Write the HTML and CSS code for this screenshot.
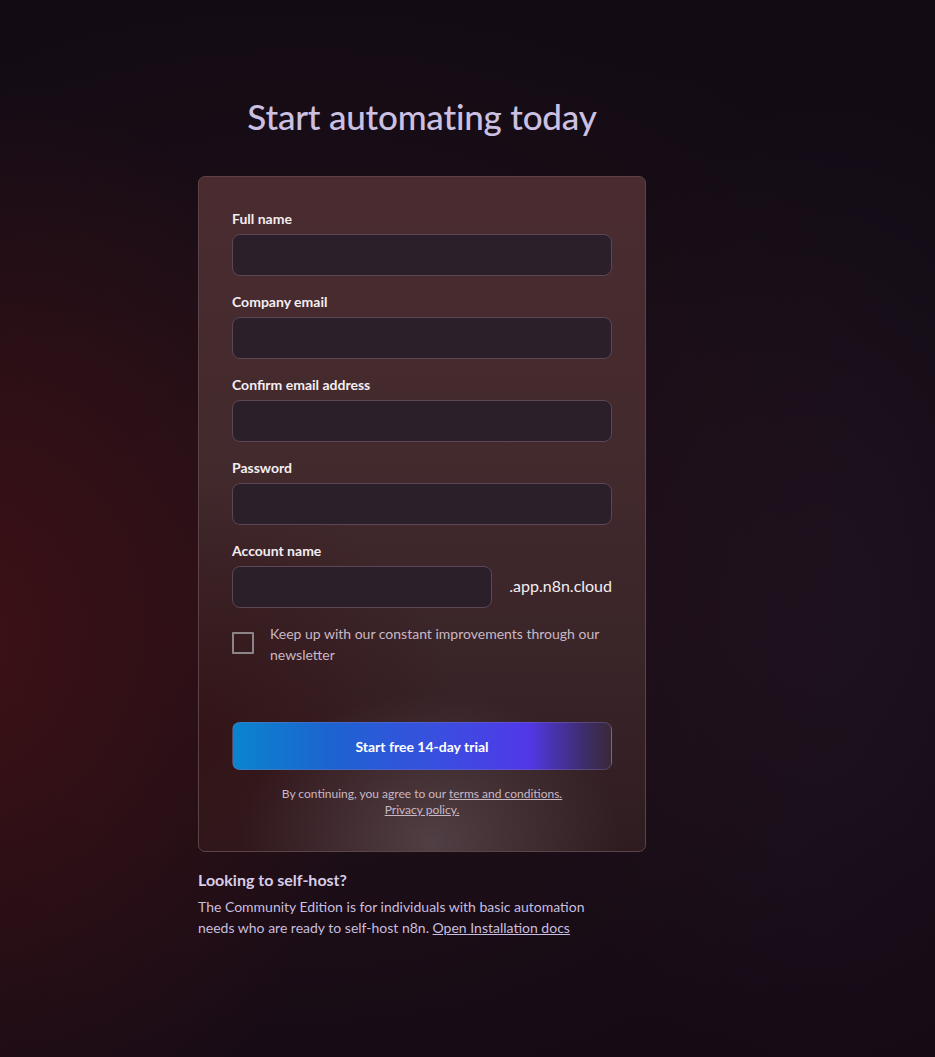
FILE: index.html
```html
<!DOCTYPE html>
<html lang="en">
<head>
<meta charset="utf-8">
<title>Start automating today</title>
<link rel="stylesheet" href="styles.css">
</head>
<body>
<div class="page">
  <h1 class="title">Start automating today</h1>
  <form class="card">
    <div class="field">
      <label class="label">Full name</label>
      <div class="input"></div>
    </div>
    <div class="field">
      <label class="label">Company email</label>
      <div class="input"></div>
    </div>
    <div class="field">
      <label class="label">Confirm email address</label>
      <div class="input"></div>
    </div>
    <div class="field">
      <label class="label">Password</label>
      <div class="input"></div>
    </div>
    <div class="field">
      <label class="label">Account name</label>
      <div class="account-row">
        <div class="input input-short"></div>
        <span class="suffix">.app.n8n.cloud</span>
      </div>
    </div>
    <div class="check-row">
      <span class="checkbox"></span>
      <span class="check-text">Keep up with our constant improvements through our newsletter</span>
    </div>
    <button type="button" class="cta">Start free 14-day trial</button>
    <p class="legal">By continuing, you agree to our <a href="#">terms and conditions.</a><br><a href="#">Privacy policy.</a></p>
  </form>
  <div class="selfhost">
    <h2 class="selfhost-title">Looking to self-host?</h2>
    <p class="selfhost-text">The Community Edition is for individuals with basic automation needs who are ready to self-host n8n. <a href="#">Open Installation docs</a></p>
  </div>
</div>
</body>
</html>
```

FILE: styles.css
```css
* { box-sizing: border-box; }
html, body { margin: 0; height: 100%; }
body {
  font-family: "Lato", "Open Sans", sans-serif;
  background:
    radial-gradient(ellipse 420px 560px at -40px 640px, rgba(72, 18, 20, 0.75), rgba(72, 18, 20, 0) 100%),
    radial-gradient(ellipse 700px 600px at 300px 560px, rgba(45, 18, 26, 0.6), rgba(45, 18, 26, 0) 100%),
    radial-gradient(ellipse 300px 500px at 820px 600px, rgba(40, 28, 48, 0.35), rgba(40, 28, 48, 0) 100%),
    linear-gradient(180deg, #120b14 0%, #150c16 60%, #140b15 100%);
  min-height: 1057px;
  color: #fff;
}
.page {
  display: flex;
  flex-direction: column;
  align-items: center;
  padding: 95px 91px 0 0;
}
.title {
  margin: 0 0 39px;
  font-size: 35px;
  line-height: 42px;
  font-weight: 500;
  color: #cbc0e2;
  letter-spacing: -0.2px;
}
.card {
  width: 448px;
  border: 1px solid #5c4446;
  border-radius: 7px;
  padding: 33px 33px 33px;
  background:
    radial-gradient(ellipse 190px 150px at 232px 665px, rgba(120, 105, 110, 0.45), rgba(120, 105, 110, 0) 100%),
    radial-gradient(ellipse 260px 260px at 0px 560px, rgba(50, 15, 18, 0.7), rgba(50, 15, 18, 0) 100%),
    linear-gradient(180deg, #4a2c2f 0%, #432a2d 40%, #3a2529 70%, #2f1c21 100%);
  display: flex;
  flex-direction: column;
}
.field {
  display: flex;
  flex-direction: column;
  gap: 8px;
  margin-bottom: 17px;
}
.label {
  font-size: 14px;
  line-height: 16px;
  font-weight: 700;
  color: #f4eef2;
  transform: translateY(1px);
}
.input {
  height: 42px;
  border: 1px solid #5a4656;
  border-radius: 8px;
  background: #2b1f2a;
}
.account-row {
  display: flex;
  align-items: center;
  justify-content: space-between;
}
.input-short { width: 260px; }
.suffix {
  font-size: 16px;
  line-height: 20px;
  color: #f4eef2;
  margin-top: -3px;
}
.check-row {
  display: flex;
  align-items: flex-start;
  gap: 16px;
  margin-top: -2px;
}
.checkbox {
  flex: none;
  width: 22px;
  height: 22px;
  border: 2px solid #8c8488;
  border-radius: 1px;
  margin-top: 9px;
}
.check-text {
  font-size: 14px;
  line-height: 21px;
  color: #c9b8c4;
}
.cta {
  margin-top: 57px;
  height: 48px;
  border: 1px solid rgba(140, 120, 170, 0.35);
  border-radius: 8px;
  font-family: inherit;
  font-size: 14px;
  font-weight: 700;
  color: #fff;
  background: linear-gradient(90deg, #0a85cd 0%, #1c64d0 25%, #3a4ee0 55%, #5138e8 78%, #3e2d6a 93%, #3a2838 100%);
}
.legal {
  margin: 16px 0 0;
  text-align: center;
  font-size: 12px;
  line-height: 16px;
  color: #c9b8c4;
}
.legal a { color: #c9b8c4; }
.selfhost {
  width: 448px;
  margin-top: 18px;
}
.selfhost-title {
  margin: 0 0 6px;
  font-size: 16px;
  line-height: 20px;
  font-weight: 700;
  color: #d8cde8;
}
.selfhost-text {
  margin: 0;
  width: 400px;
  font-size: 14px;
  line-height: 21px;
  color: #c8bedf;
}
.selfhost-text a { color: #c8bedf; }
```
